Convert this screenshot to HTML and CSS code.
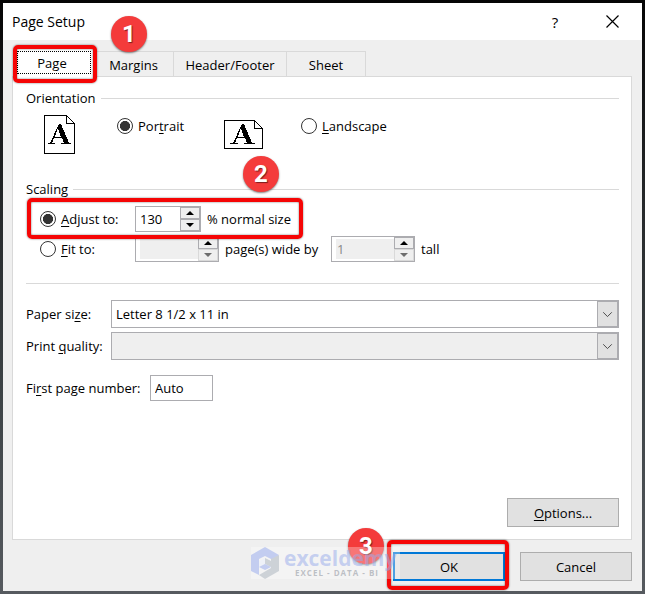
FILE: index.html
```html
<!DOCTYPE html>
<html lang="en">
<head>
    <meta charset="utf-8">
    <title>Page Setup</title>
    <link rel="stylesheet" href="styles.css">
</head>
<body>
    <div class="dialog" role="dialog" aria-labelledby="dialog-title">
        <header class="titlebar">
            <h1 id="dialog-title">Page Setup</h1>
            <button type="button" class="title-button" aria-label="Help">?</button>
            <button type="button" class="title-button" aria-label="Close">
                <svg width="13" height="13" viewBox="0 0 13 13"><path d="M.5 .5l12 12M12.500 .5l-12 12" stroke="#000" stroke-width="1.2" fill="none"/></svg>
            </button>
        </header>

        <form class="content">
            <div class="tabs" role="tablist">
                <div class="marked mark-tab">
                    <button type="button" class="tab active" role="tab" aria-selected="true">Page</button>
                    <span class="badge">1</span>
                </div>
                <button type="button" class="tab tab-margins" role="tab">Margins</button>
                <button type="button" class="tab tab-header" role="tab">Header/Footer</button>
                <button type="button" class="tab tab-sheet" role="tab">Sheet</button>
            </div>

            <div class="panel" role="tabpanel">
                <h2 class="legend">Orientation</h2>
                <div class="orientation">
                    <svg width="31" height="39" viewBox="0 0 31 39" shape-rendering="crispEdges">
                        <path d="M.5 .5h22l8 8v30h-30z" fill="#fff" stroke="#000"/>
                        <path d="M22.500 .5v8h8" fill="none" stroke="#000"/>
                        <path d="M15 9h2l8 19h2v1h-10v-1h3l-2-5h-8l-2 5h3v1h-7v-1h2zM14 13l-3 9h6z" fill="#000" fill-rule="evenodd"/>
                    </svg>
                    <label class="choice"><input type="radio" name="orientation" checked><span>Por<u>t</u>rait</span></label>
                    <svg class="landscape" width="39" height="29" viewBox="0 0 39 29" shape-rendering="crispEdges">
                        <path d="M.5 .5h30l8 8v20h-38z" fill="#fff" stroke="#000"/>
                        <path d="M30.500 .5v8h8" fill="none" stroke="#000"/>
                        <path d="M18 4h2l8 19h3v1h-11v-1h3l-2-5h-8l-2 5h3v1h-8v-1h3zM17 8l-3 9h6z" fill="#000" fill-rule="evenodd"/>
                    </svg>
                    <label class="choice"><input type="radio" name="orientation"><span><u>L</u>andscape</span></label>
                </div>

                <h2 class="legend">Scaling</h2>
                <div class="scaling">
                    <div class="row marked mark-row">
                        <label class="choice"><input type="radio" name="scaling" checked><span><u>A</u>djust to:</span></label>
                        <div class="spinner small">
                            <input type="text" id="percent" value="130">
                            <button type="button" aria-label="Increase percent"></button>
                            <button type="button" class="down" aria-label="Decrease percent"></button>
                        </div>
                        <label for="percent">% normal size</label>
                        <span class="badge">2</span>
                    </div>
                    <div class="row">
                        <label class="choice"><input type="radio" name="scaling"><span><u>F</u>it to:</span></label>
                        <div class="spinner off">
                            <input type="text" id="wide" value="">
                            <button type="button" aria-label="More pages wide"></button>
                            <button type="button" class="down" aria-label="Fewer pages wide"></button>
                        </div>
                        <label for="wide" class="wide-label">page(s) wide by</label>
                        <div class="spinner off">
                            <input type="text" id="tall" value="1">
                            <button type="button" aria-label="More pages tall"></button>
                            <button type="button" class="down" aria-label="Fewer pages tall"></button>
                        </div>
                        <label for="tall">tall</label>
                    </div>
                </div>

                <div class="paper">
                    <label for="paper-size">Paper si<u>z</u>e:</label>
                    <div class="dropdown">
                        <select id="paper-size"><option>Letter 8 1/2 x 11 in</option></select>
                        <svg viewBox="0 0 22 28" width="22" height="28"><path d="M6 12l5 5 5-5" stroke="#333" fill="none"/></svg>
                    </div>
                    <label for="print-quality">Print <u>q</u>uality:</label>
                    <div class="dropdown">
                        <select id="print-quality" disabled></select>
                        <svg viewBox="0 0 22 28" width="22" height="28"><path d="M6 12l5 5 5-5" stroke="#333" fill="none"/></svg>
                    </div>
                </div>

                <div class="first-page">
                    <label for="first-page">Fi<u>r</u>st page number:</label>
                    <input type="text" id="first-page" value="Auto">
                </div>

                <button type="button" class="button options"><span><u>O</u>ptions...</span></button>
            </div>

            <footer class="footer">
                <div class="watermark">
                    <svg width="28" height="32" viewBox="0 0 28 32">
                        <path d="M14 0L0 8v16l8 4v-16l6-3 8 4 6-5z" fill="#c3cdf0"/>
                        <path d="M28 8v16l-14 8-6-4 12-7v-9z" fill="#cdd2d7"/>
                        <path d="M14 11l6 3v6l-6 3-6-3v-6z" fill="#eef1f8"/>
                        <path d="M14 11l6 3v6l-6-3z" fill="#cdd2d7"/>
                        <path d="M8 20l6-3 6 3-6 3z" fill="#c3cdf0"/>
                    </svg>
                    <div>
                        <div class="brand">exceldemy</div>
                        <div class="tagline">EXCEL - DATA - BI</div>
                    </div>
                </div>
                <div class="marked mark-ok">
                    <button type="button" class="button primary">OK</button>
                    <span class="badge">3</span>
                </div>
                <button type="button" class="button">Cancel</button>
            </footer>
        </form>
    </div>
</body>
</html>
```

FILE: styles.css
```css
*,
*::before,
*::after {
    box-sizing: border-box;
}

body {
    margin: 0;
    padding: 3px;
    min-height: 100vh;
    display: flex;
    background: linear-gradient(#050505, #26292b 35%, #3c4245 65%, #565a5f);
    font-family: "Open Sans", "Noto Sans", sans-serif;
    font-size: 13px;
    line-height: 18px;
    color: #000;
}

button,
input,
select {
    font: inherit;
    color: inherit;
    margin: 0;
    border-radius: 0;
}

svg {
    display: block;
}

u {
    text-underline-offset: 2px;
}

.dialog {
    flex: 1;
    display: flex;
    flex-direction: column;
    background: #efefef;
}

/* Title bar */
.titlebar {
    display: flex;
    align-items: center;
    height: 37px;
    padding: 0 9px;
    background: #fff;
}

.titlebar h1 {
    flex: 1;
    margin: 0;
    font-size: 14px;
    font-weight: 400;
}

.title-button {
    display: flex;
    align-items: center;
    justify-content: center;
    width: 42px;
    height: 30px;
    margin-left: 15px;
    padding: 0;
    border: 0;
    background: none;
    font-size: 15px;
}

.content {
    flex: 1;
    display: flex;
    flex-direction: column;
    padding: 11px 10px 10px 9px;
}

/* Tabs */
.tabs {
    display: flex;
    height: 25px;
    padding-left: 2px;
}

.tab {
    height: 25px;
    padding: 2px 0 0;
    border: 1px solid #d9d9d9;
    border-bottom: 0;
    border-left: 0;
    background: #efefef;
}

.tab.active {
    width: 80px;
    height: 29px;
    margin-top: -3px;
    padding: 0 4px 0 0;
    border: 0;
    background: #fff;
    outline: 1px dotted #000;
    outline-offset: -4px;
}

.tab-margins {
    width: 80px;
}

.tab-header {
    width: 113px;
}

.tab-sheet {
    width: 79px;
}

.panel {
    flex: 1;
    display: flex;
    flex-direction: column;
    padding: 12px 12px 12px 13px;
    border: 1px solid #d9d9d9;
    background: #fff;
}

/* Orientation */
.legend {
    display: flex;
    align-items: center;
    gap: 5px;
    margin: 0 0 8px;
    font-size: 13px;
    font-weight: 400;
}

.legend::after {
    content: "";
    flex: 1;
    height: 1px;
    background: #d9d9d9;
}

.orientation {
    display: grid;
    grid-template-columns: 73px 107px 77px 1fr;
    align-items: start;
    margin-bottom: 26px;
    padding-left: 18px;
}

.orientation .choice {
    margin-top: 2px;
}

.landscape {
    margin-top: 5px;
}

.choice {
    display: flex;
    align-items: center;
    gap: 5px;
}

.choice input {
    appearance: none;
    width: 16px;
    height: 16px;
    border: 1px solid #333;
    border-radius: 50%;
    background: #fff;
}

.choice input:checked {
    background: radial-gradient(circle closest-side, #333 68%, #fff 76%);
}

/* Scaling */
.scaling {
    display: flex;
    flex-direction: column;
    gap: 4px;
    padding-bottom: 21px;
    border-bottom: 1px solid #d9d9d9;
}

.row {
    display: flex;
    align-items: center;
    gap: 6px;
    padding-left: 14px;
}

.row .choice {
    width: 89px;
}

.wide-label {
    width: 100px;
    white-space: nowrap;
}

.spinner {
    display: grid;
    grid-template-columns: 1fr 20px;
    grid-template-rows: 12px 12px;
    width: 84px;
    height: 26px;
    border: 1px solid #acacb0;
    background: #fff;
}

.spinner.small {
    width: 66px;
}

.spinner input {
    grid-row: 1 / 3;
    min-width: 0;
    width: 100%;
    padding: 0 4px;
    border: 0;
    background: none;
}

.spinner.off input {
    margin: 2px 0 2px 4px;
    width: auto;
    padding: 0 1px;
    background: #efefef;
    color: #8a8a8a;
}

.spinner button {
    display: flex;
    align-items: center;
    justify-content: center;
    padding: 0;
    border: 1px solid #acacb0;
    background: #efefef;
}

.spinner button::before {
    content: "";
    border: 4px solid transparent;
    border-top: 0;
    border-bottom-color: #000;
}

.spinner .down::before {
    border: 4px solid transparent;
    border-bottom: 0;
    border-top-color: #000;
}

.spinner.off .down {
    border-color: #d9d9d9;
}

.spinner.off .down::before {
    border-top-color: #6d6d6d;
}

/* Paper */
.paper {
    display: grid;
    grid-template-columns: 85px 1fr;
    row-gap: 4px;
    align-items: center;
    margin-top: 16px;
}

.dropdown {
    display: grid;
}

.dropdown select,
.dropdown svg {
    grid-area: 1 / 1;
}

.dropdown select {
    appearance: none;
    width: 100%;
    height: 28px;
    padding: 0 26px 0 4px;
    border: 1px solid #acacb0;
    background: #fff;
}

.dropdown select:disabled {
    background: #efefef;
    opacity: 1;
}

.dropdown svg {
    justify-self: end;
    border: 2px solid #acacb0;
    border-left-width: 1px;
    background: #e1e1e1;
    pointer-events: none;
}

.first-page {
    display: grid;
    grid-template-columns: 124px 63px;
    align-items: center;
    margin-top: 15px;
}

.first-page input {
    width: 100%;
    height: 26px;
    padding: 0 4px;
    border: 1px solid #acacb0;
}

/* Buttons */
.button {
    width: 112px;
    height: 29px;
    padding: 0;
    border: 1px solid #adadad;
    background: #e1e1e1;
}

.button.primary {
    border: 2px solid #0078d7;
}

.options {
    align-self: flex-end;
    margin-top: auto;
}

.footer {
    display: flex;
    justify-content: flex-end;
    gap: 15px;
    padding-top: 12px;
}

/* Numbered callouts */
.marked {
    position: relative;
}

.marked::after {
    content: "";
    position: absolute;
    z-index: 1;
    border: 4px solid #f50505;
    border-radius: 5px;
    box-shadow: 0 0 2px rgba(0, 0, 0, 0.6), inset 0 0 2px rgba(0, 0, 0, 0.6);
    pointer-events: none;
}

.mark-tab::after {
    inset: -6px -3px -7px -1px;
}

.mark-row::after {
    inset: -8px auto -7px 1px;
    width: 276px;
}

.mark-ok::after {
    inset: -12px -4px -9px -6px;
}

.badge {
    position: absolute;
    z-index: 2;
    width: 36px;
    height: 36px;
    border-radius: 50%;
    background: #f43b3b;
    box-shadow: 0 1px 2px rgba(0, 0, 0, 0.5);
    color: #fff;
    font: bold 24px/36px Roboto, sans-serif;
    text-align: center;
    text-shadow: 1px 1px 1px rgba(0, 0, 0, 0.5);
}

.mark-tab .badge {
    left: 97px;
    top: -35px;
}

.mark-row .badge {
    left: 217px;
    top: -50px;
}

.mark-ok .badge {
    left: -45px;
    top: -24px;
}

.watermark {
    position: absolute;
    z-index: 3;
    right: 245px;
    bottom: 15px;
    display: flex;
    gap: 5px;
    width: 149px;
    height: 32px;
    background: rgba(255, 255, 255, 0.3);
}

.brand {
    color: rgba(150, 170, 235, 0.5);
    font: bold 21px/22px "Open Sans", sans-serif;
}

.tagline {
    padding-left: 11px;
    color: rgba(150, 155, 165, 0.6);
    font: bold 8px/8px "Open Sans", sans-serif;
    letter-spacing: 1px;
}
```
